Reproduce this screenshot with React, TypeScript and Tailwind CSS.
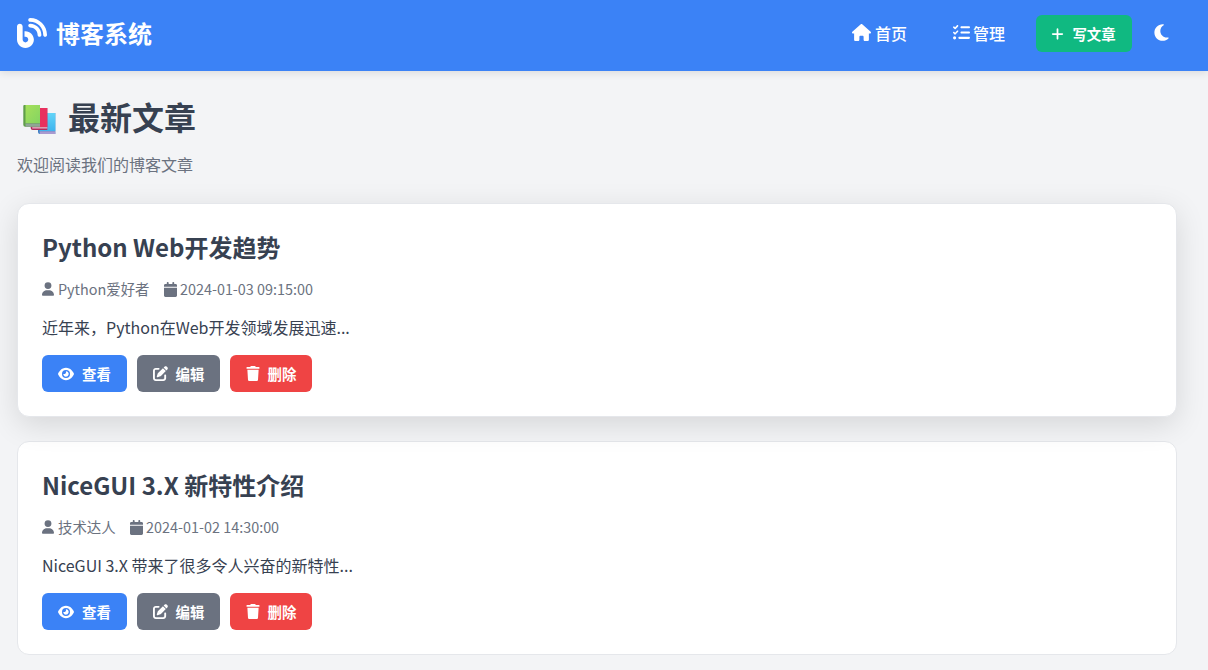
import { FaBlog, FaHouse, FaListCheck, FaPlus, FaMoon, FaUser, FaCalendar, FaEye, FaPenToSquare, FaTrash } from "react-icons/fa6";
import type { ReactNode } from "react";

const posts = [
  {
    title: "Python Web开发趋势",
    author: "Python爱好者",
    date: "2024-01-03 09:15:00",
    excerpt: "近年来，Python在Web开发领域发展迅速...",
    hovered: true,
  },
  {
    title: "NiceGUI 3.X 新特性介绍",
    author: "技术达人",
    date: "2024-01-02 14:30:00",
    excerpt: "NiceGUI 3.X 带来了很多令人兴奋的新特性...",
    hovered: false,
  },
];

// the 📚 emoji, no emoji font in the sandbox
function BooksIcon() {
  return (
    <svg viewBox="0 0 33 32" className="w-[33px] h-8 shrink-0 ml-[6px] mt-[7px]">
      <defs>
        <linearGradient id="bookBlue" x1="0" y1="0" x2="0" y2="1">
          <stop offset="0" stopColor="#63d4f7" />
          <stop offset="1" stopColor="#3fb4ee" />
        </linearGradient>
        <linearGradient id="bookGreen" x1="0" y1="0" x2="1" y2="1">
          <stop offset="0" stopColor="#a6e05a" />
          <stop offset="1" stopColor="#84d462" />
        </linearGradient>
      </defs>
      {/* blue */}
      <path d="M15 10a1 1 0 0 1 1-1h16.300v21H17a2 2 0 0 1-2-2z" fill="#3f7fc4" />
      <path d="M16.500 9h15.800v18H16.500z" fill="url(#bookBlue)" />
      <path d="M16.500 27.300h15.800V30H17z" fill="#a99ad0" />
      {/* red */}
      <path d="M7.700 5a1 1 0 0 1 1-1h15.600v22H9.700a2 2 0 0 1-2-2z" fill="#b02a5e" />
      <path d="M9.200 4h15.100v19H9.200z" fill="#e8305f" />
      <path d="M9.200 23.200h15.100v1.300H9.200z" fill="#e6b8c8" />
      {/* green */}
      <path d="M0.300 2a1 1 0 0 1 1-1H17v21.700H2.300a2 2 0 0 1-2-2z" fill="#5f9e4a" />
      <path d="M2.500 1H17v18.200H2.500z" fill="url(#bookGreen)" />
      <path d="M2.300 19.400H17v3.300H2.800z" fill="#8fa596" />
    </svg>
  );
}

function ActionButton({ icon, label, color, width }: { icon: ReactNode; label: string; color: string; width: string }) {
  return (
    <button className={`${color} ${width} h-[37px] rounded-md text-white text-[14.400px] font-bold flex items-center justify-center gap-[8px]`}>
      {icon}
      <span className="pt-[1px]">{label}</span>
    </button>
  );
}

function PostCard({ post }: { post: (typeof posts)[number] }) {
  return (
    <article
      className={`bg-white rounded-xl border border-[#e5e7eb] px-6 pt-[24px] pb-[24px] ${
        post.hovered ? "relative z-10 shadow-[0_8px_30px_rgba(0,0,0,0.12)]" : ""
      }`}
    >
      <h2 className="text-[24px] leading-[38px] font-bold text-[#374151]">{post.title}</h2>
      <div className="flex items-center gap-[14.500px] mt-[13px] text-[14.400px] leading-[20px] text-[#6b7280]">
        <span className="flex items-center gap-[4px]">
          <FaUser className="w-[12px] h-[14px]" />
          {post.author}
        </span>
        <span className="flex items-center gap-[3px]">
          <FaCalendar className="w-[13px] h-[15px]" />
          {post.date}
        </span>
      </div>
      <p className="mt-[16px] text-[16px] leading-[24px] text-[#374151]">{post.excerpt}</p>
      <div className="flex gap-[10px] mt-[16px]">
        <ActionButton color="bg-[#3b82f6]" width="w-[85px]" label="查看" icon={<FaEye className="w-[16px] h-[16px]" />} />
        <ActionButton color="bg-[#6b7280]" width="w-[83px]" label="编辑" icon={<FaPenToSquare className="w-[15px] h-[15px]" />} />
        <ActionButton color="bg-[#ef4444]" width="w-[82px]" label="删除" icon={<FaTrash className="w-[14px] h-[15px]" />} />
      </div>
    </article>
  );
}

export default function App() {
  return (
    <div className="min-h-screen bg-[#f3f4f6] font-['Noto_Sans_CJK_SC','Noto_Sans',sans-serif]">
      <header className="relative z-20 h-[71px] bg-[#3b82f6] shadow-[0_2px_8px_rgba(0,0,0,0.1)] flex items-center pl-[17px] pr-[37px] pb-[4px] text-white">
        <FaBlog className="w-[30px] h-[30px] -mt-[2px]" />
        <span className="ml-[9px] text-[24px] font-bold -mt-[2px]">博客系统</span>
        <nav className="ml-auto flex items-center">
          <a className="flex items-center gap-[4px] text-[16px] font-medium -mt-[2px]">
            <FaHouse className="w-[19px] h-[17px]" />
            首页
          </a>
          <a className="ml-[46px] flex items-center gap-[3px] text-[16px] font-medium -mt-[2px]">
            <FaListCheck className="w-[17px] h-[17px]" />
            管理
          </a>
          <button className="ml-[31px] w-[96px] h-[37px] pr-[1px] bg-[#10b981] rounded-md text-[14.400px] font-bold flex items-center justify-center gap-[8px]">
            <FaPlus className="w-[13px] h-[14px]" />
            写文章
          </button>
          <FaMoon className="ml-[20px] w-[19px] h-[19px] -mt-[3px]" />
        </nav>
      </header>
      <main className="pl-[17px] pr-[31px]">
        <div className="flex items-center gap-[12px] pt-[23px]">
          <BooksIcon />
          <h1 className="text-[32px] leading-[44px] font-bold text-[#374151]">最新文章</h1>
        </div>
        <p className="mt-[14px] text-[16px] leading-[24px] text-[#6b7280]">欢迎阅读我们的博客文章</p>
        <div className="mt-[27px] flex flex-col gap-[24px]">
          {posts.map((post) => (
            <PostCard key={post.title} post={post} />
          ))}
        </div>
      </main>
    </div>
  );
}
